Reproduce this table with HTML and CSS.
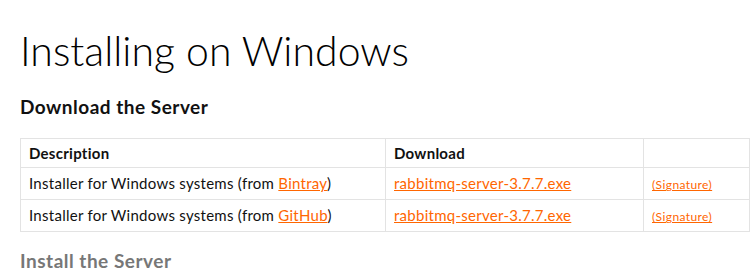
FILE: index.html
```html
<!DOCTYPE html>
<html lang="en">
  <head>
    <meta charset="UTF-8" />
    <title>Installing on Windows</title>
    <link rel="stylesheet" href="styles.css">
  </head>
  <body>
    <div class="docs">
      <h1 class="page-title">Installing on Windows</h1>
      <h3 class="section-title">Download the Server</h3>
      <table class="downloads">
        <thead>
          <tr>
            <th class="col-desc">Description</th>
            <th class="col-file">Download</th>
            <th class="col-sig"></th>
          </tr>
        </thead>
        <tbody>
          <tr>
            <td>Installer for Windows systems (from <a href="#">Bintray</a>)</td>
            <td><a href="#">rabbitmq-server-3.7.7.exe</a></td>
            <td><a class="sig" href="#">(Signature)</a></td>
          </tr>
          <tr>
            <td>Installer for Windows systems (from <a href="#">GitHub</a>)</td>
            <td><a href="#">rabbitmq-server-3.7.7.exe</a></td>
            <td><a class="sig" href="#">(Signature)</a></td>
          </tr>
        </tbody>
      </table>
      <h3 class="section-title muted">Install the Server</h3>
    </div>
  </body>
</html>
```

FILE: styles.css
```css
body {
  margin: 0;
  padding: 0 20px;
  font-family: Lato, "Open Sans", sans-serif;
  color: #111;
}

.docs .page-title {
  font-size: 41px;
  font-weight: 300;
  line-height: 1.2;
  margin: 26px 0 0 0;
  color: #000;
}
.docs .section-title {
  font-size: 19px;
  font-weight: 700;
  letter-spacing: 0.5px;
  line-height: 1.3;
  margin: 20px 0 18px 0;
  color: #111;
}
.docs .section-title.muted {
  color: #777;
  margin-top: 17px;
}
.docs .downloads {
  border-collapse: collapse;
  width: 730px;
  font-size: 15px;
  letter-spacing: 0.27px;
}
.docs .downloads th,
.docs .downloads td {
  border: 1px solid #e3e3e3;
  text-align: left;
  padding: 0 8px;
  height: 31px;
}
.docs .downloads th {
  font-weight: 700;
  height: 28px;
}
.docs .col-desc {
  width: 348px;
}
.docs .col-file {
  width: 241px;
}
.docs .downloads a {
  color: #ff6600;
}
.docs .downloads .sig {
  font-size: 12px;
  letter-spacing: 0.4px;
}
```
